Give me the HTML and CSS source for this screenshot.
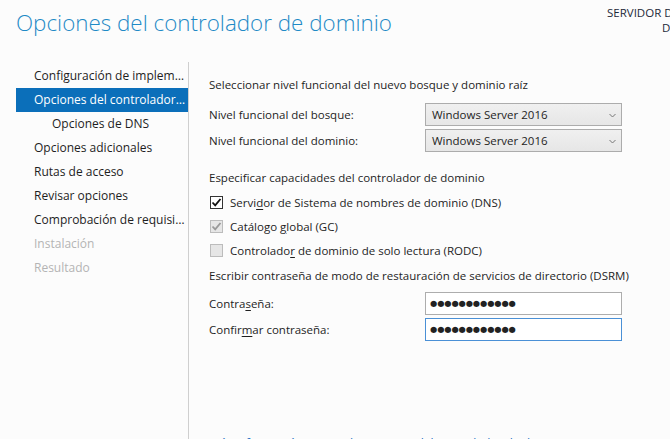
FILE: index.html
```html
<!DOCTYPE html>
<html lang="es">
<head>
<meta charset="utf-8">
<link rel="stylesheet" href="styles.css">
</head>
<body>
<div class="page">
  <header class="header">
    <h1 class="title">Opciones del controlador de dominio</h1>
    <div class="server">
      <div>SERVIDOR DE DESTINO</div>
      <div>DC01</div>
    </div>
  </header>
  <div class="main">
    <nav class="nav">
      <div class="nav-item">Configuración de implementación</div>
      <div class="nav-item selected">Opciones del controlador de dominio</div>
      <div class="nav-item sub">Opciones de DNS</div>
      <div class="nav-item">Opciones adicionales</div>
      <div class="nav-item">Rutas de acceso</div>
      <div class="nav-item">Revisar opciones</div>
      <div class="nav-item">Comprobación de requisitos previos</div>
      <div class="nav-item disabled">Instalación</div>
      <div class="nav-item disabled">Resultado</div>
    </nav>
    <section class="content">
      <div class="section-label">Seleccionar nivel funcional del nuevo bosque y dominio raíz</div>
      <div class="form-row first">
        <span class="label">Nivel funcional del bosque:</span>
        <div class="select"><span>Windows Server 2016</span><svg class="chev" width="7" height="5" viewBox="0 0 7 5"><path d="M0.5 1 L3.5 4 L6.5 1" fill="none" stroke="#777" stroke-width="1"/></svg></div>
      </div>
      <div class="form-row">
        <span class="label">Nivel funcional del dominio:</span>
        <div class="select"><span>Windows Server 2016</span><svg class="chev" width="7" height="5" viewBox="0 0 7 5"><path d="M0.5 1 L3.5 4 L6.5 1" fill="none" stroke="#777" stroke-width="1"/></svg></div>
      </div>

      <div class="section-label second">Especificar capacidades del controlador de dominio</div>
      <div class="check-list">
        <div class="check-row">
          <span class="box checked"><svg width="11" height="11" viewBox="0 0 11 11"><path d="M1.5 5.5 L4.2 8.3 L9.5 2" fill="none" stroke="#111" stroke-width="1.8"/></svg></span>
          <span>Servi<u>d</u>or de Sistema de nombres de dominio (DNS)</span>
        </div>
        <div class="check-row">
          <span class="box grey"><svg width="11" height="11" viewBox="0 0 11 11"><path d="M1.5 5.5 L4.2 8.3 L9.5 2" fill="none" stroke="#999" stroke-width="1.8"/></svg></span>
          <span>Catálogo <u>g</u>lobal (GC)</span>
        </div>
        <div class="check-row">
          <span class="box grey"></span>
          <span>Controlado<u>r</u> de dominio de solo lectura (RODC)</span>
        </div>
      </div>

      <div class="section-label third">Escribir contraseña de modo de restauración de servicios de directorio (DSRM)</div>
      <div class="form-row first pw">
        <span class="label">Contra<u>s</u>eña:</span>
        <div class="input">●●●●●●●●●●●●</div>
      </div>
      <div class="form-row">
        <span class="label">Confir<u>m</u>ar contraseña:</span>
        <div class="input focused">●●●●●●●●●●●●</div>
      </div>

      <a class="more" href="#">Más información acerca de opciones del controlador de dominio</a>
    </section>
  </div>
</div>
</body>
</html>
```
FILE: styles.css
```css
* { box-sizing: border-box; }
html, body {
  margin: 0;
  padding: 0;
  background: #fcfcfc;
  overflow: hidden;
}
body {
  width: 670px;
  height: 439px;
  font-family: "Open Sans", "Noto Sans", sans-serif;
  font-size: 11.5px;
  color: #1e1e1e;
}
.page {
  width: 670px;
  height: 439px;
  overflow: hidden;
}
.header {
  display: flex;
  justify-content: space-between;
  height: 62px;
}
.title {
  margin: 7px 0 0 16px;
  font-size: 22.4px;
  font-weight: 300;
  color: #1f8ac6;
  white-space: nowrap;
}
.server {
  margin-top: 5px;
  width: 63px;
  overflow: hidden;
  white-space: nowrap;
  font-size: 11.5px;
  color: #1c2838;
  line-height: 15px;
}
.server div:last-child { padding-left: 55px; }
.main {
  display: flex;
  height: 377px;
}
.nav {
  width: 189px;
  padding: 2px 0 0 16px;
  border-right: 1px solid #cfcfcf;
  flex-shrink: 0;
}
.nav-item {
  height: 24px;
  line-height: 24px;
  padding-left: 18px;
  padding-right: 2px;
  white-space: nowrap;
  overflow: hidden;
  text-overflow: ellipsis;
  width: 172px;
  font-size: 12px;
  color: #1e1e1e;
}
.nav-item.selected {
  background: #0b6fba;
  color: #fff;
}
.nav-item.sub { padding-left: 36px; }
.nav-item.disabled { color: #b4b4b4; }
.content {
  padding: 14px 0 0 20px;
  flex: 1;
  position: relative;
}
.section-label {
  height: 18px;
  line-height: 18px;
  white-space: nowrap;
}
.section-label.second { margin-top: 17px; }
.section-label.third { margin-top: 5px; }
.form-row {
  display: flex;
  align-items: center;
  height: 23px;
  margin-top: 3px;
}
.form-row.first { margin-top: 9px; }
.form-row.first.pw { margin-top: 7px; }
.label {
  width: 216px;
  white-space: nowrap;
}
.select {
  width: 197px;
  height: 23px;
  border: 1px solid #acacac;
  background: linear-gradient(#f0f0f0, #e6e6e6);
  display: flex;
  align-items: center;
  justify-content: space-between;
  padding: 0 5px 0 6px;
}
.chev { margin-top: 1px; }
.input {
  width: 197px;
  height: 23px;
  border: 1px solid #adadad;
  background: #fff;
  padding: 0 4px;
  line-height: 21px;
  font-family: "DejaVu Sans", sans-serif;
  font-size: 8.2px;
  color: #222;
}
.input.focused { border-color: #4a90d6; }
.check-list {
  margin-top: 3px;
}
.check-row {
  display: flex;
  align-items: center;
  height: 24px;
  white-space: nowrap;
}
.box {
  width: 13px;
  height: 13px;
  border: 1px solid #333;
  background: #fff;
  margin: 0 7px 0 1px;
  display: flex;
  align-items: center;
  justify-content: center;
}
.box.grey {
  border-color: #bcbcbc;
  background: #e6e6e6;
}
u { text-decoration-thickness: 1px; text-underline-offset: 2px; }
.more {
  position: absolute;
  left: 20px;
  top: 373px;
  color: #1a6fc4;
  text-decoration: none;
  white-space: nowrap;
  font-size: 12px;
}
```
